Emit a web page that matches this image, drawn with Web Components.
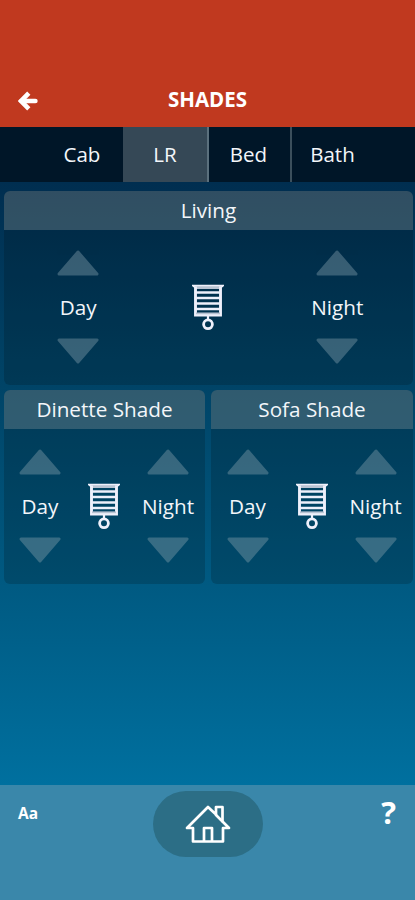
<!DOCTYPE html>
<html lang="en">
<head>
<meta charset="utf-8">
<title>Shades</title>
<style>
html,body{margin:0;height:100%}
body{font-family:"Open Sans","Noto Sans",sans-serif;color:#f3f6fa;overflow:hidden}
</style>
</head>
<body>
<shades-app></shades-app>
<script>
const define = (name, html) => customElements.define(name, class extends HTMLElement {
  constructor() {
    super();
    this.attachShadow({mode: 'open'}).innerHTML = html;
  }
});

define('app-header', `<style>
:host{display:grid;grid-template-columns:56px 1fr 56px;align-items:center;box-sizing:border-box;height:127px;padding-top:73px;background:#c0391f;color:#fff}
svg{display:block;margin:2px 0 0 18px}
h1{margin:0;text-align:center;font-size:20.5px;font-weight:700;line-height:52px;padding-bottom:2px}
</style>
<svg width="20" height="20" viewBox="0 0 20 20" fill="none" stroke="#fff"><path d="M10.8 2.2 3 10l7.8 7.8" stroke-width="4.6"/><path d="M3.5 10H17.4" stroke-width="4.6" stroke-linecap="round"/></svg>
<h1><slot></slot></h1>`);

define('tab-bar', `<style>
:host{display:flex;justify-content:center;height:55px;background:#001628}
</style><slot></slot>`);

define('tab-item', `<style>
:host{display:block;box-sizing:border-box;width:83px;text-align:center;font-size:20.5px;line-height:55px;border-right:2px solid transparent}
:host(:first-child){padding:0 0 0 3px}
:host([active]){width:86px;padding:0;background:#354856;border-right-color:#5b707d}
:host([divided]){padding-right:2px;border-right-color:#3b4f5c}
</style><slot></slot>`);

define('arrow-button', `<style>
:host{display:block;width:42px;height:26px}
:host([down]) svg{transform:scaleY(-1)}
svg{display:block}
</style>
<svg width="42" height="26" viewBox="0 0 42 26"><path d="M21 2 40 24H2Z" fill="#8aa4b0" stroke="#8aa4b0" stroke-width="3" stroke-linejoin="round"/></svg>`);

define('shade-control', `<style>
:host{display:flex;flex-direction:column;align-items:center;font-size:20.7px;line-height:28px}
arrow-button{opacity:.4}
span{padding:17.4px 0 17.1px;white-space:nowrap}
</style>
<arrow-button></arrow-button><span><slot></slot></span><arrow-button down></arrow-button>`);

define('blind-icon', `<style>
:host{display:block;width:34px;height:48px}
svg{display:block}
</style>
<svg width="34" height="48" viewBox="0 0 34 48" fill="none" stroke="#eef0fb">
<path d="M4 4.5H30" stroke="#b9c4d3" stroke-width="3"/>
<path d="M1 2.5H33M1.5 2.3 4 4.5M32.5 2.3 30 4.5" stroke-width="1.6"/>
<path d="M4.5 3.5V32H29.5V3.5" stroke-width="2.9"/>
<path d="M5 9.5H29M5 15H29M5 20.5H29M5 26H29" stroke-width="2.6"/>
<path d="M5 30.3H29" stroke-width="1.8" stroke="#b9c4d3"/>
<path d="M17 32V37" stroke-width="2.2"/><circle cx="17" cy="41.3" r="4.4" stroke-width="2.8"/>
</svg>`);

define('shade-panel', `<style>
:host{display:block;border-radius:6px;overflow:hidden;background:rgba(0,15,20,.2)}
h2{margin:0;height:39px;font-size:20.7px;font-weight:400;line-height:38px;text-align:center;background:rgba(160,170,170,.3)}
.body{display:grid;grid-template-columns:repeat(3,var(--col,64px));justify-content:start;margin-left:var(--inset,4px);justify-items:center;align-items:start;height:135px;padding-top:19.5px}
blind-icon{margin-top:33.5px}
</style>
<h2><slot></slot></h2>
<div class="body"><shade-control>Day</shade-control><blind-icon></blind-icon><shade-control>Night</shade-control></div>`);

define('app-footer', `<style>
:host{display:grid;grid-template-columns:1fr 110px 1fr;height:115px;background:#3a87aa;color:#fff;font-weight:700}
.size{font-size:15.5px;line-height:20px;padding:18px 0 0 18px}
.help{font-size:31px;line-height:34px;text-align:right;padding:10px 19px 0 0}
.home{display:flex;align-items:center;justify-content:center;height:66px;margin:6px -.5px 0 .5px;border-radius:33px;background:#2c6e86}
</style>
<div class="size">Aa</div>
<div class="home"><svg width="46" height="40" viewBox="0 0 46 40" fill="none" stroke="#fff" stroke-width="2.7" stroke-linejoin="round"><path d="M23 3 2 24H8V37.5H38V24H44L37.5 17.5V3H31V10.5Z"/><path d="M30.5 10.5 37.5 17.5M19 37V24H27V37"/></svg></div>
<div class="help">?</div>`);

define('shades-app', `<style>
:host{display:flex;flex-direction:column;width:415px;height:900px;background:linear-gradient(#002e50 182px,#004467 387px,#005a82 587px,#00709f 785px)}
main{flex:1;display:grid;grid-template-columns:201px 202px;gap:5.5px 6px;align-content:start;padding:9px 2px 0 4px}
.wide{grid-column:1/-1;--col:129.5px;--inset:9.5px}
.right{--inset:4.5px}
</style>
<app-header>SHADES</app-header>
<tab-bar><tab-item>Cab</tab-item><tab-item active>LR</tab-item><tab-item divided>Bed</tab-item><tab-item>Bath</tab-item></tab-bar>
<main><shade-panel class="wide">Living</shade-panel><shade-panel>Dinette Shade</shade-panel><shade-panel class="right">Sofa Shade</shade-panel></main>
<app-footer></app-footer>`);
</script>
</body>
</html>
